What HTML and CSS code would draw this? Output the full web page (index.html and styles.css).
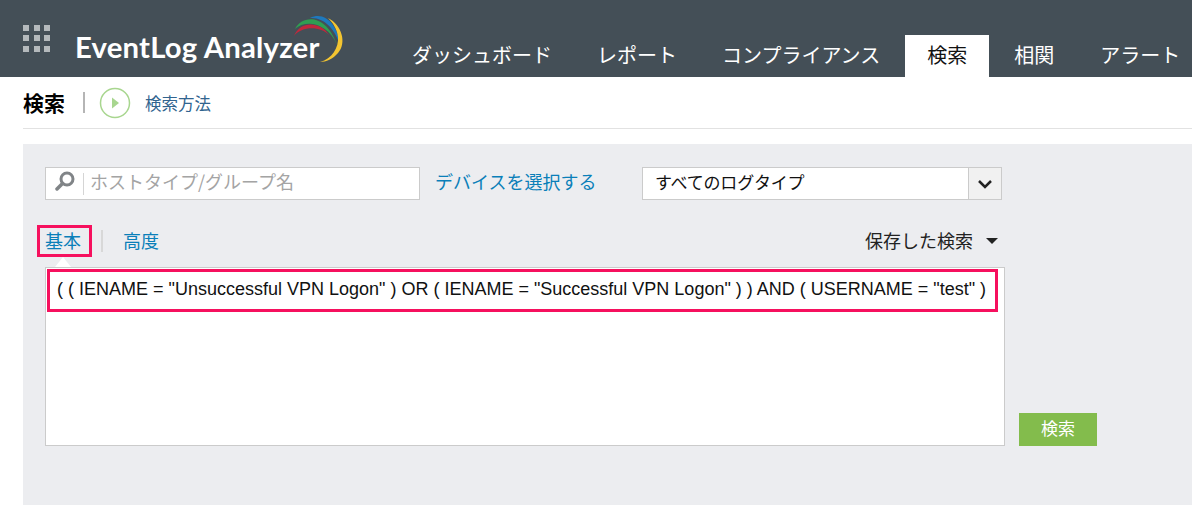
FILE: index.html
```html
<!DOCTYPE html>
<html lang="ja">
<head>
<meta charset="utf-8">
<title>EventLog Analyzer</title>
<link rel="stylesheet" href="styles.css">
</head>
<body>
<header class="topbar">
  <div class="brand">
    <svg class="apps" width="28" height="28" viewBox="0 0 28 28" aria-hidden="true">
      <g fill="#b4b9bc">
        <rect x="0" y="0" width="6" height="6"/><rect x="11" y="0" width="6" height="6"/><rect x="21" y="0" width="6" height="6"/>
        <rect x="0" y="10" width="6" height="6"/><rect x="11" y="10" width="6" height="6"/><rect x="21" y="10" width="6" height="6"/>
        <rect x="0" y="21" width="6" height="6"/><rect x="11" y="21" width="6" height="6"/><rect x="21" y="21" width="6" height="6"/>
      </g>
    </svg>
    <span class="logo-text">EventLog Analyzer</span>
    <svg class="swoosh" width="54" height="50" viewBox="0 0 54 50" aria-hidden="true">
      <path d="M2 21C8 6 28 6 37 20C28 11 10 11 2 21Z" fill="#c0283c"/>
      <path d="M3 14C10 0 34 -2 45 30C36 8 14 4 3 14Z" fill="#2f9e52"/>
      <path d="M18 3C32 -4 46 8 49 34C44 14 32 2 18 3Z" fill="#1e79bd"/>
      <path d="M36 3C50 10 55 28 46 38C41 44 34 47 28 47C40 44 47 32 46 22C45 14 41 8 36 3Z" fill="#f3c531"/>
    </svg>
  </div>
  <nav class="tabs">
    <a class="tab">ダッシュボード</a>
    <a class="tab">レポート</a>
    <a class="tab">コンプライアンス</a>
    <a class="tab tab-active">検索</a>
    <a class="tab">相関</a>
    <a class="tab tab-last">アラート</a>
  </nav>
</header>

<div class="subbar">
  <h1 class="page-title">検索</h1>
  <span class="subbar-sep"></span>
  <svg class="play" width="32" height="32" viewBox="0 0 32 32" aria-hidden="true">
    <circle cx="16" cy="16" r="14.500" fill="none" stroke="#a8d68f" stroke-width="1.500"/>
    <path d="M13 10.500L20 16L13 21.500Z" fill="#a8d68f"/>
  </svg>
  <a class="howto">検索方法</a>
</div>

<main class="panel">
  <div class="filters">
    <div class="host-input">
      <svg class="magnifier" width="22" height="20" viewBox="0 0 22 20" aria-hidden="true">
        <circle cx="13" cy="8" r="6" fill="none" stroke="#808487" stroke-width="3"/>
        <path d="M8.500 12.500L3 18" stroke="#808487" stroke-width="3.500" stroke-linecap="round"/>
      </svg>
      <span class="host-sep"></span>
      <span class="placeholder">ホストタイプ/グループ名</span>
    </div>
    <a class="device-link">デバイスを選択する</a>
    <div class="log-select">
      <span class="log-value">すべてのログタイプ</span>
      <span class="log-arrow">
        <svg width="16" height="10" viewBox="0 0 16 10" aria-hidden="true">
          <path d="M2 2L8 8L14 2" fill="none" stroke="#222" stroke-width="2.500"/>
        </svg>
      </span>
    </div>
  </div>

  <div class="mode-row">
    <a class="mode mode-marked">基本</a>
    <span class="mode-sep"></span>
    <a class="mode">高度</a>
    <div class="saved">保存した検索<span class="caret"></span></div>
  </div>

  <div class="query-row">
    <div class="query-box">
      <span class="notch"></span>
      <div class="query-line">( ( IENAME = "Unsuccessful VPN Logon" ) OR ( IENAME = "Successful VPN Logon" ) ) AND ( USERNAME = "test" )</div>
    </div>
    <button class="search-btn">検索</button>
  </div>
</main>
</body>
</html>
```
FILE: styles.css
```css
* { box-sizing: border-box; }
html, body { margin: 0; padding: 0; }
body {
  width: 1192px;
  height: 505px;
  overflow: hidden;
  background: #fff;
  color: #111;
  font-family: "Liberation Sans", "Noto Sans CJK JP", sans-serif;
}
a { text-decoration: none; }

.topbar {
  height: 77px;
  background: #444f57;
  display: flex;
  align-items: flex-end;
}
.brand {
  width: 389.500px;
  height: 77px;
  position: relative;
  flex: none;
}
.apps { position: absolute; left: 23px; top: 25px; }
.logo-text {
  position: absolute;
  left: 75px;
  top: 30px;
  font-family: "Lato", sans-serif;
  font-weight: 700;
  font-size: 29.300px;
  line-height: 34px;
  color: #fff;
  white-space: nowrap;
  letter-spacing: 0.200px;
}
.swoosh { position: absolute; left: 292px; top: 15px; overflow: visible; }

.tabs { display: flex; height: 42px; }
.tab {
  height: 42px;
  line-height: 40px;
  padding: 0 22.500px;
  color: #fff;
  font-size: 20px;
  font-family: "Noto Sans CJK JP", sans-serif;
  white-space: nowrap;
}
.tab-active { background: #fff; color: #111; padding: 0 22px; margin: 0 2.500px; }
.tab-last { margin-left: 1px; }

.subbar {
  height: 52px;
  margin-left: 23px;
  border-bottom: 1px solid #e2e2e2;
  display: flex;
  align-items: center;
}
.page-title {
  margin: 0;
  font-size: 21px;
  font-weight: 700;
  font-family: "Noto Sans CJK JP", sans-serif;
  color: #000;
  line-height: 50px;
  position: relative;
  top: -1px;
}
.subbar-sep {
  width: 2px;
  height: 21px;
  background: #b5b5b5;
  margin: 0 15px 0 18px;
}
.play { flex: none; margin-left: -1px; }
.howto {
  margin-left: 14px;
  font-size: 16.500px;
  font-family: "Noto Sans CJK JP", sans-serif;
  color: #31648f;
}

.panel {
  margin: 15px 0 0 23px;
  height: 361px;
  background: #ecedf0;
  padding: 23px 0 0 22px;
}
.filters { display: flex; align-items: center; height: 33px; }
.host-input {
  width: 375px;
  height: 33px;
  background: #fff;
  border: 1px solid #cbcbcb;
  display: flex;
  align-items: center;
  padding-left: 8px;
}
.magnifier { margin-bottom: 6px; }
.host-sep { width: 1px; height: 22px; background: #d5d5d5; margin: 0 6px 0 7px; }
.placeholder {
  font-size: 18px;
  color: #a4a4a4;
  font-family: "Noto Sans CJK JP", sans-serif;
  white-space: nowrap;
  padding-bottom: 5px;
}
.device-link {
  margin-left: 15px;
  width: 207px;
  color: #0a7fb9;
  font-size: 18px;
  font-family: "Noto Sans CJK JP", sans-serif;
  white-space: nowrap;
  padding-bottom: 5px;
}
.log-select {
  width: 360px;
  height: 33px;
  background: #fff;
  border: 1px solid #cbcbcb;
  display: flex;
}
.log-value {
  flex: 1;
  padding-left: 12px;
  line-height: 27px;
  font-size: 17px;
  letter-spacing: -0.200px;
  font-family: "Noto Sans CJK JP", sans-serif;
  color: #111;
}
.log-arrow {
  width: 33px;
  background: #f1f1f1;
  border-left: 1px solid #cbcbcb;
  display: flex;
  align-items: center;
  justify-content: center;
}

.mode-row {
  display: flex;
  align-items: center;
  height: 32px;
  margin: 25px 0 0 -8px;
  width: 961px;
}
.mode {
  font-size: 18px;
  font-family: "Noto Sans CJK JP", sans-serif;
  color: #0a7fb9;
  white-space: nowrap;
  padding-bottom: 3px;
}
.mode-marked {
  width: 55px;
  height: 32px;
  line-height: 24px;
  border: 3px solid #f6105e;
  padding-left: 5px;
}
.mode-sep { width: 2px; height: 22px; background: #d8d8d8; margin: 0 20px 0 9px; }
.saved {
  margin-left: auto;
  display: flex;
  align-items: center;
  font-size: 18px;
  font-family: "Noto Sans CJK JP", sans-serif;
  color: #222;
  white-space: nowrap;
  padding-bottom: 2px;
}
.caret {
  margin-left: 13px;
  width: 0;
  height: 0;
  border-left: 6px solid transparent;
  border-right: 6px solid transparent;
  border-top: 6px solid #222;
  position: relative;
  top: 1px;
}

.query-row { display: flex; align-items: flex-end; margin-top: 10px; }
.query-box {
  position: relative;
  width: 960px;
  height: 179px;
  background: #fff;
  border: 1px solid #cbcbcb;
  padding: 1px 6px 0 1px;
}
.notch {
  position: absolute;
  left: 9px;
  top: -11px;
  width: 0;
  height: 0;
  border-left: 8px solid transparent;
  border-right: 8px solid transparent;
  border-bottom: 10px solid #fff;
}
.query-line {
  height: 43px;
  border: 3px solid #f6105e;
  padding-left: 7px;
  line-height: 35px;
  font-size: 18px;
  color: #111;
  white-space: nowrap;
  overflow: hidden;
}
.search-btn {
  margin-left: 14px;
  width: 78px;
  height: 33px;
  background: #83bc4c;
  color: #fff;
  border: 0;
  padding: 0 0 4px;
  font-size: 17px;
  font-family: "Noto Sans CJK JP", sans-serif;
}
```
